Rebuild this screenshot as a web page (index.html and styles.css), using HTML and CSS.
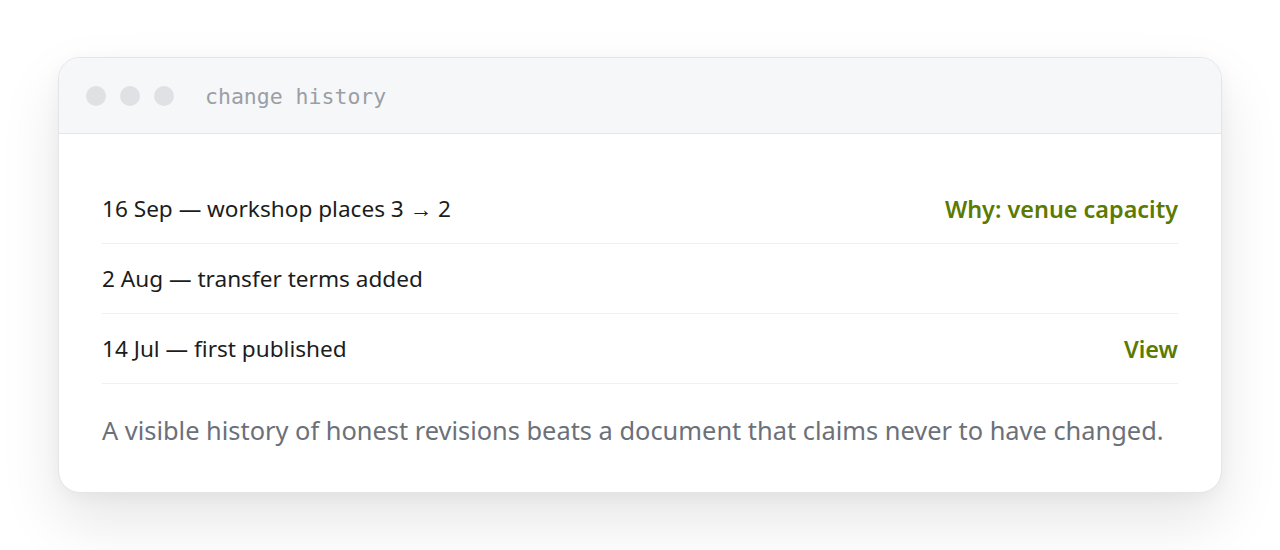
FILE: index.html
```html
<!DOCTYPE html>
<html lang="en">
<head>
<meta charset="utf-8">
<title>change history</title>
<link rel="stylesheet" href="styles.css">
</head>
<body>
<div class="window">
  <div class="titlebar">
    <span class="dot"></span><span class="dot"></span><span class="dot"></span>
    <span class="title">change history</span>
  </div>
  <div class="content">
    <ul class="history">
      <li class="entry"><span class="change">16 Sep — workshop places 3 → 2</span><a class="link">Why: venue capacity</a></li>
      <li class="entry"><span class="change">2 Aug — transfer terms added</span></li>
      <li class="entry"><span class="change">14 Jul — first published</span><a class="link">View</a></li>
    </ul>
    <p class="note">A visible history of honest revisions beats a document that claims never to have changed.</p>
  </div>
</div>
</body>
</html>
```

FILE: styles.css
```css
html, body {
  margin: 0;
  padding: 0;
  background: #ffffff;
}
html {
  height: 100%;
}
body {
  box-sizing: border-box;
  min-height: 100%;
  padding: 57px 58px 58px 58px;
  font-family: "Noto Sans", "Open Sans", sans-serif;
}
.window {
  background: #ffffff;
  border: 1px solid #e3e5e8;
  border-radius: 22px;
  overflow: hidden;
  box-shadow: 0 28px 60px rgba(0, 0, 0, 0.1), 0 4px 16px rgba(0, 0, 0, 0.04);
}
.titlebar {
  height: 75px;
  background: #f6f7f8;
  border-bottom: 1px solid #e3e5e8;
  display: flex;
  align-items: center;
  padding-left: 27px;
  gap: 14px;
}
.dot {
  width: 20px;
  height: 20px;
  border-radius: 50%;
  background: #dfe1e4;
}
.title {
  margin-left: 17px;
  font-family: "DejaVu Sans Mono", "Liberation Mono", monospace;
  font-size: 21.5px;
  color: #9a9fa6;
  position: relative;
  top: 1px;
}
.content {
  padding: 40px 43px 45px 43px;
}
.history {
  list-style: none;
  margin: 0;
  padding: 0;
}
.entry {
  height: 69px;
  border-bottom: 1px solid #eef0f2;
  display: flex;
  align-items: center;
  justify-content: space-between;
  font-size: 22.6px;
  color: #1c1c1c;
}
.link {
  color: #5b7a00;
  font-weight: 600;
  font-size: 23.4px;
}
.note {
  margin: 29px 0 0 0;
  font-size: 25.4px;
  color: #6b7079;
  line-height: 34px;
}
```
